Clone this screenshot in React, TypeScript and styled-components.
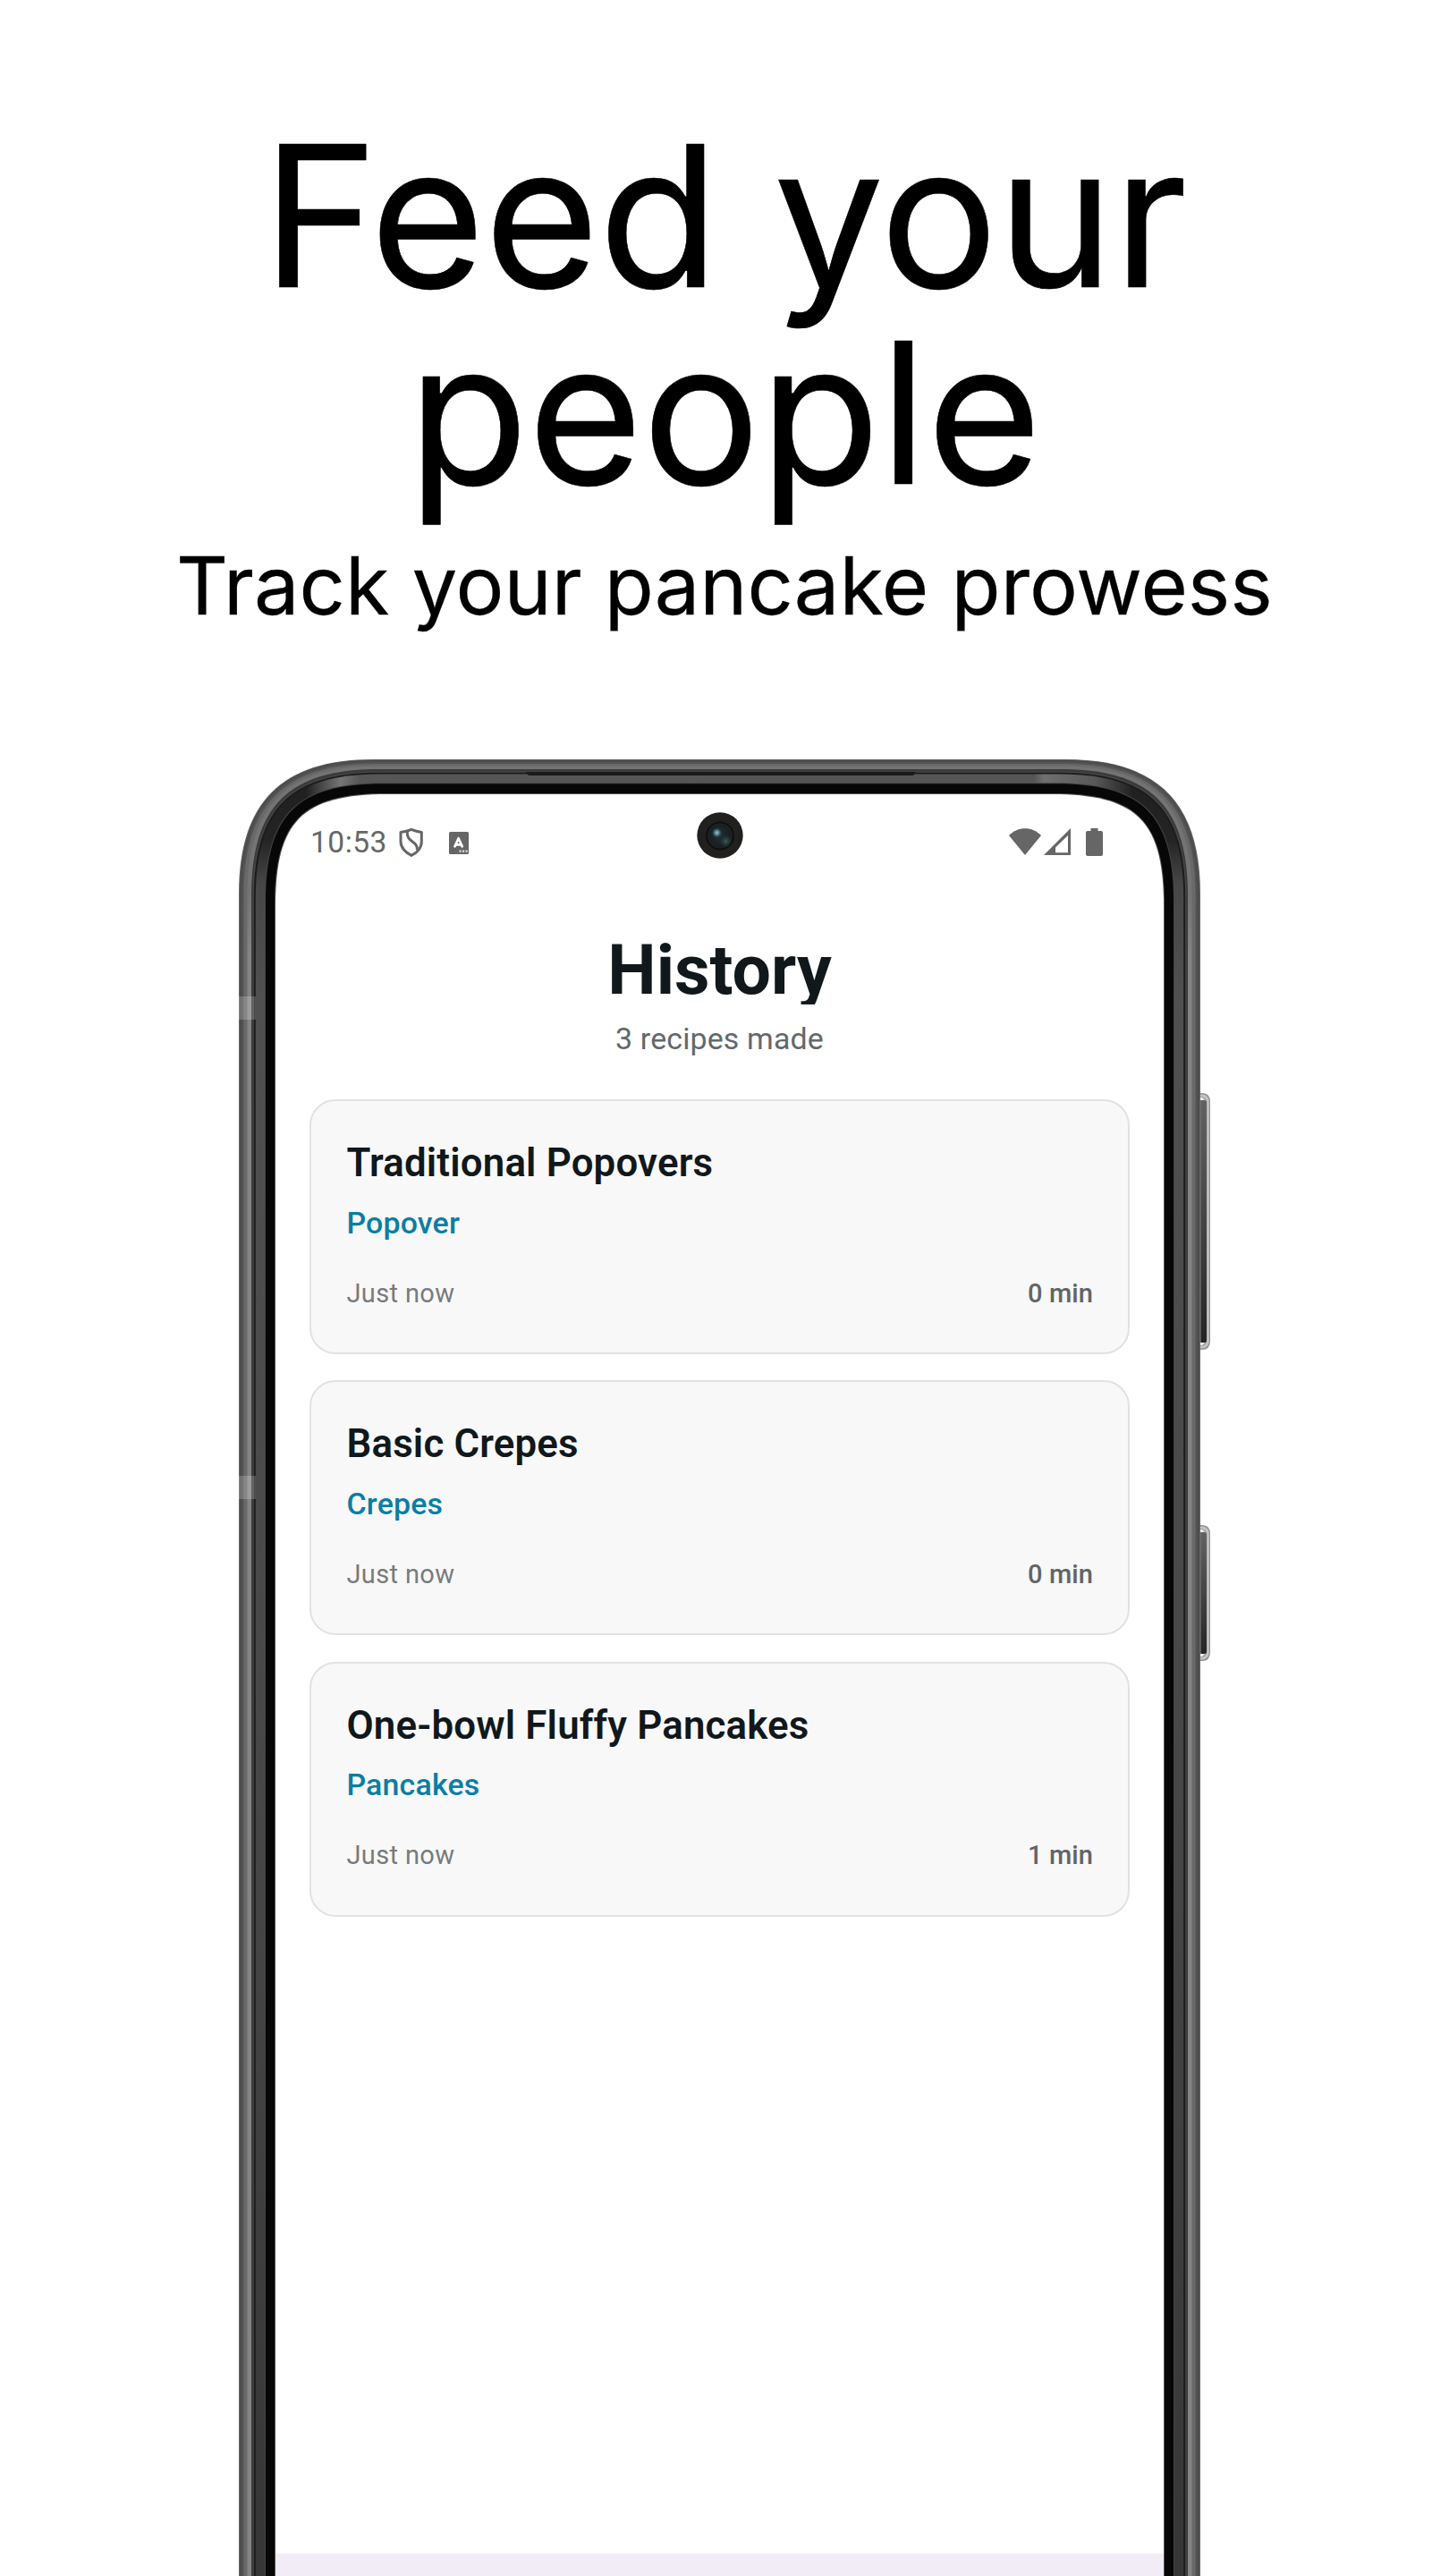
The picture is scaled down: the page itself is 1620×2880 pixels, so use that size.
import React from "react";
import styled, { createGlobalStyle } from "styled-components";

const GlobalStyle = createGlobalStyle`
  html, body { margin: 0; padding: 0; background: #fff; }
  *, *::before, *::after { box-sizing: border-box; }
`;

const Page = styled.main`
  width: 1620px;
  height: 2880px;
  overflow: hidden;
  background: #fff;
  display: flex;
  flex-direction: column;
`;

const Hero = styled.header`
  height: 849px;
  flex: none;
  padding-top: 131px;
  text-align: center;
  color: #000;
  font-family: Inter, sans-serif;
  font-weight: 400;
`;

const Headline = styled.h1`
  margin: 0 auto;
  width: 1300px;
  font-size: 220px;
  line-height: 220px;
  font-weight: 400;
  letter-spacing: -0.5px;
  -webkit-text-stroke: 0.6px #000;
`;

const Tagline = styled.p`
  margin: 29px 0 0;
  font-size: 90px;
  line-height: 110px;
  white-space: nowrap;
  -webkit-text-stroke: 0.3px #000;
`;

const Phone = styled.section`
  position: relative;
  flex: none;
  width: 1087px;
  height: 2031px;
  margin-left: 267px;
  padding: 39px 0 0 41px;
`;

const Bezel = styled.svg`
  position: absolute;
  left: 0;
  top: 0;
  display: block;
`;

const Screen = styled.div`
  position: relative;
  width: 993px;
  height: 1992px;
  display: flex;
  flex-direction: column;
  font-family: Roboto, sans-serif;
`;

const StatusBar = styled.div`
  display: grid;
  grid-template-columns: 1fr 52px 1fr;
  align-items: center;
  height: 106px;
  padding: 0 39px;
  color: #666;
`;

const StatusGroup = styled.div<{ $end?: boolean }>`
  display: flex;
  align-items: center;
  justify-content: ${(p) => (p.$end ? "flex-end" : "flex-start")};
  padding: ${(p) => (p.$end ? "0 29px 0 0" : "2px 0 0 0")};
`;

const Clock = styled.span`
  font-size: 33.5px;
  line-height: 40px;
  width: 99px;
  letter-spacing: 0.5px;
`;

const Glyph = styled.svg<{ $gap?: number }>`
  display: block;
  flex: none;
  margin-left: ${(p) => p.$gap ?? 0}px;
`;

const CameraHole = styled.div`
  margin-top: -14px;
`;

const Titles = styled.div`
  display: flex;
  flex-direction: column;
  align-items: center;
  padding-top: 53px;
`;

const Title = styled.h2`
  margin: 0;
  height: 75.5px;
  overflow: hidden;
  font-size: 77px;
  line-height: 77px;
  font-weight: 700;
  color: #11181c;
`;

const Count = styled.p`
  margin: 17px 0 0;
  font-size: 33.9px;
  line-height: 44px;
  letter-spacing: 0.15px;
  color: #62696d;
`;

const Cards = styled.div`
  display: flex;
  flex-direction: column;
  gap: 29.4px;
  padding: 45.5px 38px 0 38px;
  flex: 1;
`;

const Card = styled.article`
  height: 285px;
  flex: none;
  border: 2.4px solid #e2e2e2;
  border-radius: 29px;
  background: #f8f8f8;
  padding: 41px 39px 0 39.5px;
`;

const CardTitle = styled.h3`
  margin: 0;
  font-size: 43.8px;
  line-height: 57px;
  font-weight: 600;
  letter-spacing: 0.17px;
  color: #11181c;
`;

const Category = styled.p`
  margin: 15.5px 0 0;
  font-size: 33.9px;
  line-height: 46px;
  font-weight: 500;
  letter-spacing: 0.17px;
  color: #0a7ea4;
`;

const Meta = styled.div`
  display: flex;
  justify-content: space-between;
  margin-top: 38px;
  font-size: 29px;
  line-height: 34px;
`;

const When = styled.span`
  color: #777b7d;
  letter-spacing: 0.35px;
`;

const Duration = styled.span`
  color: #5f6568;
  font-weight: 500;
  letter-spacing: 0.1px;
`;

const TabBar = styled.div`
  height: 25px;
  background: #f2ecf7;
`;

const W = 1075;

/* Continuous-curvature outline of the phone, inset from its outer edge. */
function outline(side: number, top: number) {
  const reach = 150 - side * 0.61;
  const ctrl = 48 - side * 0.44;
  const l = side;
  const r = W - side;
  const t = top;
  return `M${l} 2060 V${t + reach} C${l} ${t + ctrl} ${l + ctrl} ${t} ${l + reach} ${t} H${r - reach} C${r - ctrl} ${t} ${r} ${t + ctrl} ${r} ${t + reach} V2060 Z`;
}

const layers: { side: number; top: number; fill: string }[] = [
  { side: 0, top: 0, fill: "#646464" },
  { side: 1, top: 0.6, fill: "#4d4d4d" },
  { side: 3.5, top: 3, fill: "#555" },
  { side: 5.5, top: 5, fill: "#696969" },
  { side: 9.5, top: 7.5, fill: "url(#shine)" },
  { side: 14, top: 11, fill: "#3a3a3a" },
  { side: 15.6, top: 13.5, fill: "#474747" },
  { side: 16.8, top: 14.8, fill: "#1c1c1c" },
];

function SideButton({ y, h }: { y: number; h: number }) {
  return (
    <g>
      <path d={`M1072 ${y} H1077 Q1086 ${y} 1086 ${y + 10} V${y + h - 10} Q1086 ${y + h} 1077 ${y + h} H1072 Z`} fill="#929292" />
      <path d={`M1072 ${y + 1.5} H1077 Q1084.8 ${y + 2} 1084.8 ${y + 11} V${y + h - 11} Q1084.8 ${y + h - 2} 1077 ${y + h - 1.5} H1072 Z`} fill="#c4c4c4" />
      <path d={`M1072 ${y + 4} H1077 Q1082.5 ${y + 5} 1082.5 ${y + 12} V${y + h - 12} Q1082.5 ${y + h - 5} 1077 ${y + h - 4} H1072 Z`} fill="#a2a2a2" />
      <path d={`M1072 ${y + 5} H1077 L1081 ${y + 9} H1072 Z M1072 ${y + h - 5} H1077 L1081 ${y + h - 9} H1072 Z`} fill="#ededed" />
      <rect x="1074" y={y + 8} width="8" height={h - 16} rx="2" fill="url(#btn)" />
      <rect x="1074" y={y + 8} width="2" height={h - 16} fill="#777" opacity=".6" />
    </g>
  );
}

function PhoneBezel() {
  return (
    <Bezel width="1087" height="2031" viewBox="0 0 1087 2031" aria-hidden="true">
      <defs>
        <linearGradient id="shine" gradientUnits="userSpaceOnUse" x1="0" y1="0" x2="0" y2="220">
          <stop offset="0" stopColor="#737373" />
          <stop offset=".7" stopColor="#747474" />
          <stop offset="1" stopColor="#848484" />
        </linearGradient>
        <linearGradient id="bandTop" gradientUnits="userSpaceOnUse" x1="75" y1="0" x2="1000" y2="0">
          <stop offset="0" stopColor="#202020" />
          <stop offset=".015" stopColor="#404040" />
          <stop offset=".042" stopColor="#757575" />
          <stop offset=".065" stopColor="#565656" />
          <stop offset=".88" stopColor="#555" />
          <stop offset=".892" stopColor="#707070" />
          <stop offset=".955" stopColor="#575757" />
          <stop offset="1" stopColor="#202020" />
        </linearGradient>
        <linearGradient id="bandSide" gradientUnits="userSpaceOnUse" x1="0" y1="30" x2="0" y2="2031">
          <stop offset="0" stopColor="#202020" />
          <stop offset=".03" stopColor="#242424" />
          <stop offset=".055" stopColor="#474747" />
          <stop offset=".12" stopColor="#505050" />
          <stop offset=".6" stopColor="#464646" />
          <stop offset="1" stopColor="#363636" />
        </linearGradient>
        <linearGradient id="btn" x1="0" y1="0" x2="0" y2="1">
          <stop offset="0" stopColor="#626262" />
          <stop offset=".5" stopColor="#444" />
          <stop offset="1" stopColor="#242424" />
        </linearGradient>
        <clipPath id="topClip"><rect x="75" y="0" width="925" height="80" /></clipPath>
      </defs>
      <SideButton y={373} h={287} />
      <SideButton y={856} h={152} />
      {layers.map((l) => (
        <path key={l.side} d={outline(l.side, l.top)} fill={l.fill} />
      ))}
      <path d={outline(18.8, 16.5)} fill="url(#bandSide)" />
      <path d={outline(18.8, 16.5)} fill="url(#bandTop)" clipPath="url(#topClip)" />
      <path d="M321 14 H757 L754 18 H324 Z" fill="#1b1b1b" />
      <path d={outline(29, 26.2)} fill="#444" />
      <path d={outline(30, 27.2)} fill="#070707" />
      <path d={outline(40, 38)} fill="#555" />
      <path d={outline(41, 39)} fill="#fff" />
      <rect x="0" y="265" width="19" height="26" fill="#fff" opacity=".2" />
      <rect x="0" y="801" width="19" height="26" fill="#fff" opacity=".2" />
    </Bezel>
  );
}

function Camera() {
  return (
    <Glyph width="52" height="52" viewBox="0 0 52 52">
      <defs>
        <radialGradient id="lens">
          <stop offset="0" stopColor="#203034" />
          <stop offset=".8" stopColor="#182022" />
          <stop offset="1" stopColor="#1d2223" />
        </radialGradient>
        <radialGradient id="glint">
          <stop offset="0" stopColor="#8cbcd0" />
          <stop offset=".4" stopColor="#5c8796" />
          <stop offset="1" stopColor="#243a40" stopOpacity="0" />
        </radialGradient>
        <radialGradient id="green">
          <stop offset="0" stopColor="#356055" />
          <stop offset="1" stopColor="#284840" stopOpacity="0" />
        </radialGradient>
      </defs>
      <circle cx="26" cy="26" r="25.7" fill="#22201e" />
      <circle cx="26" cy="26.5" r="16" fill="#0e0f0f" />
      <circle cx="26" cy="26.5" r="14" fill="url(#lens)" />
      <circle cx="32.5" cy="32.5" r="6.5" fill="url(#green)" />
      <circle cx="22.5" cy="23" r="6" fill="url(#glint)" />
    </Glyph>
  );
}

const recipes = [
  { title: "Traditional Popovers", kind: "Popover", when: "Just now", time: "0 min" },
  { title: "Basic Crepes", kind: "Crepes", when: "Just now", time: "0 min" },
  { title: "One-bowl Fluffy Pancakes", kind: "Pancakes", when: "Just now", time: "1 min" },
];

export default function App() {
  return (
    <>
      <GlobalStyle />
      <Page>
        <Hero>
          <Headline>Feed your people</Headline>
          <Tagline>Track your pancake prowess</Tagline>
        </Hero>
        <Phone>
          <PhoneBezel />
          <Screen>
            <StatusBar>
              <StatusGroup>
                <Clock>10:53</Clock>
                <Glyph width="28" height="34" viewBox="0 0 28 34" fill="none" stroke="#666" strokeWidth="3" strokeLinejoin="round">
                  <path d="M14 2.4 Q19 4.6 25.3 5.6 V16 C25.3 23 20 28.6 14 31.4 C8 28.6 2 23 2 16 V5.6 Q9 4.6 14 2.4 Z" />
                  <path d="M9.3 4.5 C8 17.5 21.5 14.5 20.3 25.5" />
                </Glyph>
                <Glyph $gap={28} width="22" height="25" viewBox="0 0 22 25">
                  <rect width="22" height="25" rx="1.5" fill="#666" />
                  <path d="M6 17.4 L10.6 7.2 L15.2 17.4 M7.6 14.4 H13.6" fill="none" stroke="#fff" strokeWidth="2.6" strokeLinejoin="round" />
                  <path d="M11.5 20.5 h2.2 v2.2 h-2.2z M15 20.5 h2.2 v2.2 h-2.2z M18.5 20.5 h2.2 v2.2 h-2.2z" fill="#ddd" />
                </Glyph>
              </StatusGroup>
              <CameraHole>
                <Camera />
              </CameraHole>
              <StatusGroup $end>
                <Glyph width="36" height="30" viewBox="0 0 36 30">
                  <path d="M18 30 L0 8 C10-2.4 26-2.4 36 8 Z" fill="#666" />
                </Glyph>
                <Glyph $gap={3.5} width="30" height="30" viewBox="0 0 30 30">
                  <path fillRule="evenodd" d="M30 0 V30 H0 Z M27 8 L13 21.5 V27.2 H27 Z" fill="#666" />
                </Glyph>
                <Glyph $gap={17} width="19" height="31" viewBox="0 0 19 31">
                  <path d="M5.5 0 H13.5 V3 H17 Q19 3 19 5 V29 Q19 31 17 31 H2 Q0 31 0 29 V5 Q0 3 2 3 H5.5 Z" fill="#666" />
                </Glyph>
              </StatusGroup>
            </StatusBar>
            <Titles>
              <Title>History</Title>
              <Count>3 recipes made</Count>
            </Titles>
            <Cards>
              {recipes.map((r) => (
                <Card key={r.title}>
                  <CardTitle>{r.title}</CardTitle>
                  <Category>{r.kind}</Category>
                  <Meta>
                    <When>{r.when}</When>
                    <Duration>{r.time}</Duration>
                  </Meta>
                </Card>
              ))}
            </Cards>
            <TabBar />
          </Screen>
        </Phone>
      </Page>
    </>
  );
}
